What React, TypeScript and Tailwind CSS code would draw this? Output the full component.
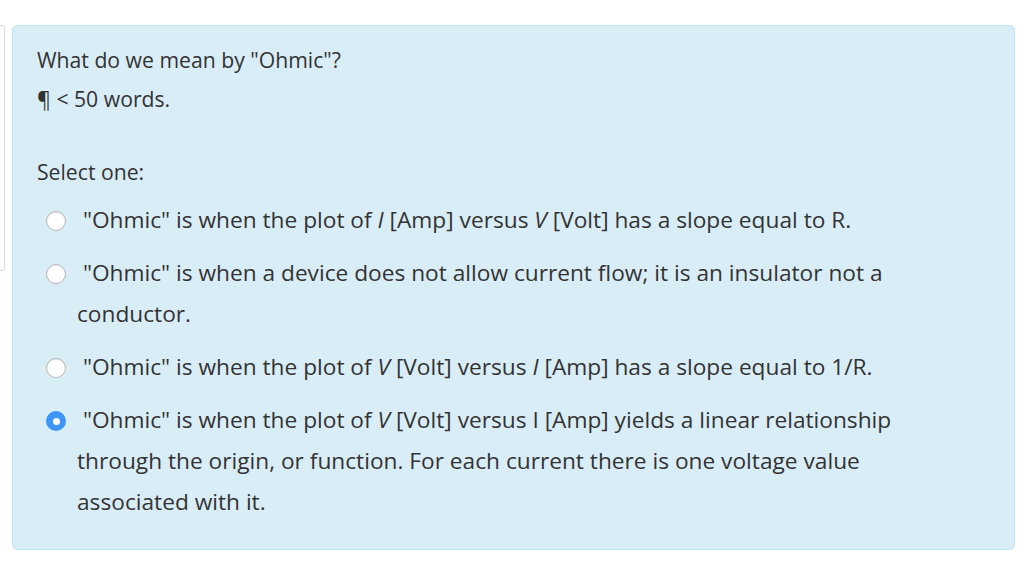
import React from "react";

function Radio({ checked }: { checked?: boolean }) {
  if (checked) {
    return (
      <div className="mt-[12px] ml-[9px] h-[20px] w-[20px] shrink-0 rounded-full bg-[#3d95f5] flex items-center justify-center">
        <div className="h-[7px] w-[7px] rounded-full bg-white" />
      </div>
    );
  }
  return (
    <div className="mt-[12px] ml-[9px] h-[20px] w-[20px] shrink-0 rounded-full bg-white border border-[#b5b5b5] shadow-[inset_0_1px_1px_rgba(0,0,0,0.08)]" />
  );
}

function Option({ checked, children }: { checked?: boolean; children: React.ReactNode }) {
  return (
    <div className="flex items-start">
      <Radio checked={checked} />
      <div className="ml-[11px] w-[863px] leading-[41px] text-[22.7px]">{children}</div>
    </div>
  );
}

export default function App() {
  return (
    <div
      className="flex w-[1024px] h-[573px] bg-white text-[#333333]"
      style={{ fontFamily: '"Open Sans", "Noto Sans", sans-serif' }}
    >
      <div className="mt-[25px] h-[246px] w-[5px] shrink-0 rounded-r-[4px] border border-l-0 border-[#d9d9d9] bg-white" />
      <div className="ml-[7px] mt-[25px] h-[525px] w-[1003px] shrink-0 rounded-[5px] border border-[#bce8f1] bg-[#d9edf7] pl-[24px] pr-[20px] pt-[20px]">
        <div className="text-[21.2px] leading-[28px]">What do we mean by "Ohmic"?</div>
        <div className="mt-[11px] text-[21.2px] leading-[28px]">¶ &lt; 50 words.</div>
        <div className="mt-[45px] text-[21.2px] leading-[28px]">Select one:</div>
        <div className="mt-[13px] flex flex-col gap-[12px]">
          <Option>
            &nbsp;"Ohmic" is when the plot of <i>I</i> [Amp] versus <i>V</i> [Volt] has a slope equal to R.
          </Option>
          <Option>
            &nbsp;"Ohmic" is when a device does not allow current flow; it is an insulator not a conductor.
          </Option>
          <Option>
            &nbsp;"Ohmic" is when the plot of <i>V</i> [Volt] versus <i>I</i> [Amp] has a slope equal to 1/R.
          </Option>
          <Option checked>
            &nbsp;"Ohmic" is when the plot of <i>V</i> [Volt] versus I [Amp] yields a linear relationship through the
            origin, or function. For each current there is one voltage value associated with it.
          </Option>
        </div>
      </div>
    </div>
  );
}
